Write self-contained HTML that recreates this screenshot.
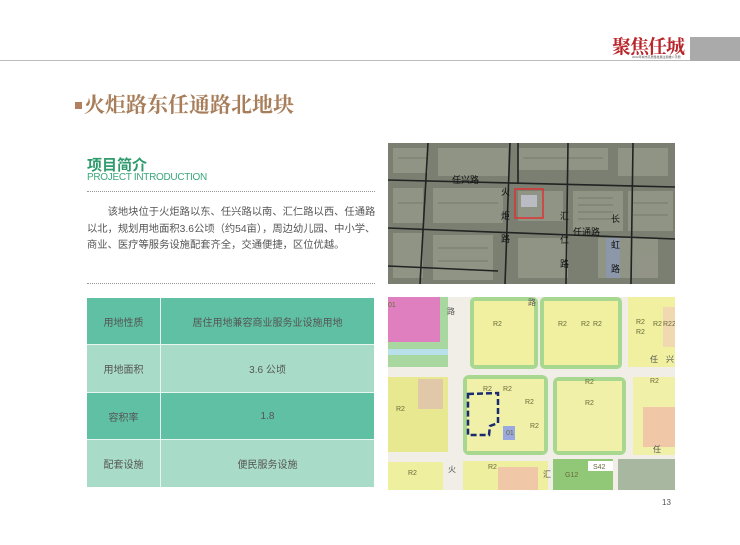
<!DOCTYPE html>
<html><head><meta charset="utf-8"><style>
*{margin:0;padding:0;box-sizing:border-box}
body{width:740px;height:545px;background:#fff;position:relative;overflow:hidden;font-family:"Liberation Sans","Noto Sans CJK SC",sans-serif}
.a{position:absolute}
</style></head><body>
<div class="a" style="left:0;top:60px;width:690px;height:1px;background:#bbb"></div>
<div class="a" style="left:690px;top:37px;width:50px;height:24px;background:#aaa"></div>
<div class="a" style="left:612px;top:32px;font-size:19px;color:#b8252a;font-family:'Noto Serif CJK SC',serif;font-weight:bold;letter-spacing:-1px">聚焦任城</div>
<div class="a" style="left:632px;top:55px;font-size:3px;color:#555">2022年城市高质量发展主题推介手册</div>
<div class="a" style="left:75px;top:102px;width:7px;height:7px;background:#b08060"></div>
<div class="a" style="left:84px;top:89px;font-size:21px;font-weight:bold;color:#a87e5a;font-family:'Noto Serif CJK SC',serif">火炬路东任通路北地块</div>
<div class="a" style="left:87px;top:154px;font-size:15px;font-weight:bold;color:#2f9a6c">项目简介</div>
<div class="a" style="left:87px;top:172px;font-size:10px;color:#3aa878;letter-spacing:-0.3px">PROJECT INTRODUCTION</div>
<div class="a" style="left:87px;top:191px;width:288px;border-top:1px dotted #999"></div>
<div class="a" style="left:87px;top:205px;width:290px;font-size:10.3px;line-height:16.5px;color:#555;text-indent:2em">该地块位于火炬路以东、任兴路以南、汇仁路以西、任通路以北，规划用地面积3.6公顷（约54亩），周边幼儿园、中小学、商业、医疗等服务设施配套齐全，交通便捷，区位优越。</div>
<div class="a" style="left:87px;top:283px;width:288px;border-top:1px dotted #999"></div>
<div class="a" style="left:87px;top:298px;width:287px;height:189px;font-size:10px;color:#555">
<div style="display:flex;height:47px;background:#5fc0a3;border-bottom:1px solid #e8f5f0"><div style="width:74px;border-right:1px solid #e8f5f0;display:flex;align-items:center;justify-content:center">用地性质</div><div style="flex:1;display:flex;align-items:center;justify-content:center">居住用地兼容商业服务业设施用地</div></div>
<div style="display:flex;height:48px;background:#a8dbc8;border-bottom:1px solid #e8f5f0"><div style="width:74px;border-right:1px solid #e8f5f0;display:flex;align-items:center;justify-content:center">用地面积</div><div style="flex:1;display:flex;align-items:center;justify-content:center">3.6 公顷</div></div>
<div style="display:flex;height:47px;background:#5fc0a3;border-bottom:1px solid #e8f5f0"><div style="width:74px;border-right:1px solid #e8f5f0;display:flex;align-items:center;justify-content:center">容积率</div><div style="flex:1;display:flex;align-items:center;justify-content:center">1.8</div></div>
<div style="display:flex;height:47px;background:#a8dbc8"><div style="width:74px;border-right:1px solid #e8f5f0;display:flex;align-items:center;justify-content:center">配套设施</div><div style="flex:1;display:flex;align-items:center;justify-content:center">便民服务设施</div></div>
</div>
<svg class="a" style="left:388px;top:143px" width="287" height="141" viewBox="0 0 287 141">
<rect width="287" height="141" fill="#7a7f72"/>
<g fill="#959889" opacity="0.85">
<rect x="5" y="5" width="35" height="25"/><rect x="50" y="5" width="70" height="28"/><rect x="130" y="5" width="90" height="22"/><rect x="230" y="5" width="50" height="28"/>
<rect x="5" y="45" width="30" height="35"/><rect x="45" y="45" width="70" height="35"/><rect x="130" y="48" width="45" height="30"/><rect x="185" y="48" width="50" height="40"/><rect x="240" y="48" width="45" height="40"/>
<rect x="5" y="90" width="30" height="45"/><rect x="45" y="92" width="60" height="45"/><rect x="130" y="95" width="50" height="40"/><rect x="210" y="95" width="60" height="40"/>
</g>
<g stroke="#646959" stroke-width="1" opacity="0.6">
<line x1="190" y1="55" x2="225" y2="55"/><line x1="190" y1="62" x2="225" y2="62"/><line x1="190" y1="69" x2="225" y2="69"/><line x1="190" y1="76" x2="225" y2="76"/>
<line x1="10" y1="15" x2="40" y2="15"/><line x1="135" y1="15" x2="215" y2="15"/><line x1="10" y1="60" x2="35" y2="60"/><line x1="50" y1="60" x2="110" y2="60"/>
<line x1="50" y1="105" x2="100" y2="105"/><line x1="50" y1="118" x2="100" y2="118"/><line x1="245" y1="60" x2="280" y2="60"/><line x1="245" y1="72" x2="280" y2="72"/>
</g>
<rect x="218" y="95" width="14" height="40" fill="#8a9ab8" opacity="0.7"/>
<g stroke="#222" stroke-width="1.6" fill="none">
<path d="M0 37 L287 44"/><path d="M0 85 L287 96"/><path d="M0 123 L110 128"/>
<path d="M40 0 L32 141"/><path d="M122 0 L117 141"/><path d="M180 0 L178 141"/><path d="M245 0 L243 141"/><path d="M130 0 L130 40"/>
</g>
<rect x="127" y="46" width="28" height="29" fill="none" stroke="#d33" stroke-width="1.5"/>
<rect x="133" y="52" width="16" height="12" fill="#ccd" opacity="0.7"/>
<g font-size="9" fill="#111" font-family="Noto Sans CJK SC,sans-serif">
<text x="64" y="40">任兴路</text><text x="113" y="52">火</text><text x="113" y="76">炬</text><text x="113" y="99">路</text>
<text x="172" y="76">汇</text><text x="172" y="100">仁</text><text x="172" y="124">路</text><text x="185" y="92">任通路</text>
<text x="223" y="79">长</text><text x="223" y="105">虹</text><text x="223" y="129">路</text>
</g></svg>
<svg class="a" style="left:388px;top:297px" width="287" height="193" viewBox="0 0 287 193">
<rect width="287" height="193" fill="#f0eee6"/>
<rect x="0" y="0" width="60" height="70" fill="#a8d8a0"/><rect x="0" y="0" width="52" height="45" fill="#e07fc0"/>
<rect x="0" y="52" width="60" height="6" fill="#b8e0e8"/>
<rect x="0" y="80" width="60" height="75" fill="#e8e890"/><rect x="30" y="82" width="25" height="30" fill="#e0c8a8"/>
<rect x="0" y="165" width="55" height="28" fill="#eef0a0"/>
<rect x="82" y="0" width="68" height="72" rx="5" fill="#a8d890"/><rect x="86" y="4" width="60" height="64" fill="#f0f0a0"/>
<rect x="152" y="0" width="82" height="72" rx="5" fill="#a8d890"/><rect x="156" y="4" width="74" height="64" fill="#f0f0a0"/>
<rect x="240" y="0" width="47" height="70" fill="#f0f0a0"/><rect x="275" y="10" width="12" height="40" fill="#f0d8b0"/>
<rect x="75" y="78" width="85" height="80" rx="6" fill="#a8d890"/><rect x="79" y="82" width="77" height="72" fill="#f0f0a8"/>
<rect x="165" y="80" width="73" height="78" rx="6" fill="#a8d890"/><rect x="169" y="84" width="65" height="70" fill="#f0f0a8"/>
<rect x="245" y="80" width="42" height="78" fill="#f0f0a8"/><rect x="255" y="110" width="32" height="40" fill="#f0c8a8"/>
<rect x="75" y="164" width="85" height="29" fill="#eef0a0"/><rect x="110" y="170" width="40" height="23" fill="#f0c8a8"/>
<rect x="165" y="162" width="60" height="31" fill="#90c878"/><rect x="200" y="164" width="25" height="10" fill="#fff"/>
<rect x="230" y="162" width="57" height="31" fill="#a8b8a0"/>
<rect x="115" y="129" width="12" height="14" fill="#9aa8e0"/>
<path d="M80 97 L110 96 L110 126 L102 129 L101 138 L80 138 Z" fill="none" stroke="#1a2a70" stroke-width="2.5" stroke-dasharray="6 3"/>
<g font-size="7" fill="#6a6a3a">
<text x="105" y="29">R2</text><text x="170" y="29">R2</text><text x="193" y="29">R2</text><text x="205" y="29">R2</text>
<text x="248" y="27">R2</text><text x="265" y="29">R2</text><text x="275" y="29">R22</text><text x="248" y="37">R2</text>
<text x="95" y="94">R2</text><text x="115" y="94">R2</text><text x="137" y="107">R2</text><text x="142" y="131">R2</text>
<text x="197" y="87">R2</text><text x="197" y="108">R2</text><text x="262" y="86">R2</text>
<text x="8" y="114">R2</text><text x="20" y="178">R2</text><text x="100" y="172">R2</text><text x="177" y="180">G12</text><text x="205" y="172">S42</text>
<text x="0" y="10">01</text><text x="118" y="138">01</text>
</g>
<g font-size="8" fill="#555" font-family="Noto Sans CJK SC,sans-serif"><text x="59" y="17">路</text><text x="140" y="8">路</text><text x="262" y="65">任</text><text x="278" y="65">兴</text><text x="60" y="175">火</text><text x="155" y="180">汇</text><text x="265" y="155">任</text></g>
</svg>
<div class="a" style="left:662px;top:498px;font-size:8px;color:#555">13</div>
</body></html>
